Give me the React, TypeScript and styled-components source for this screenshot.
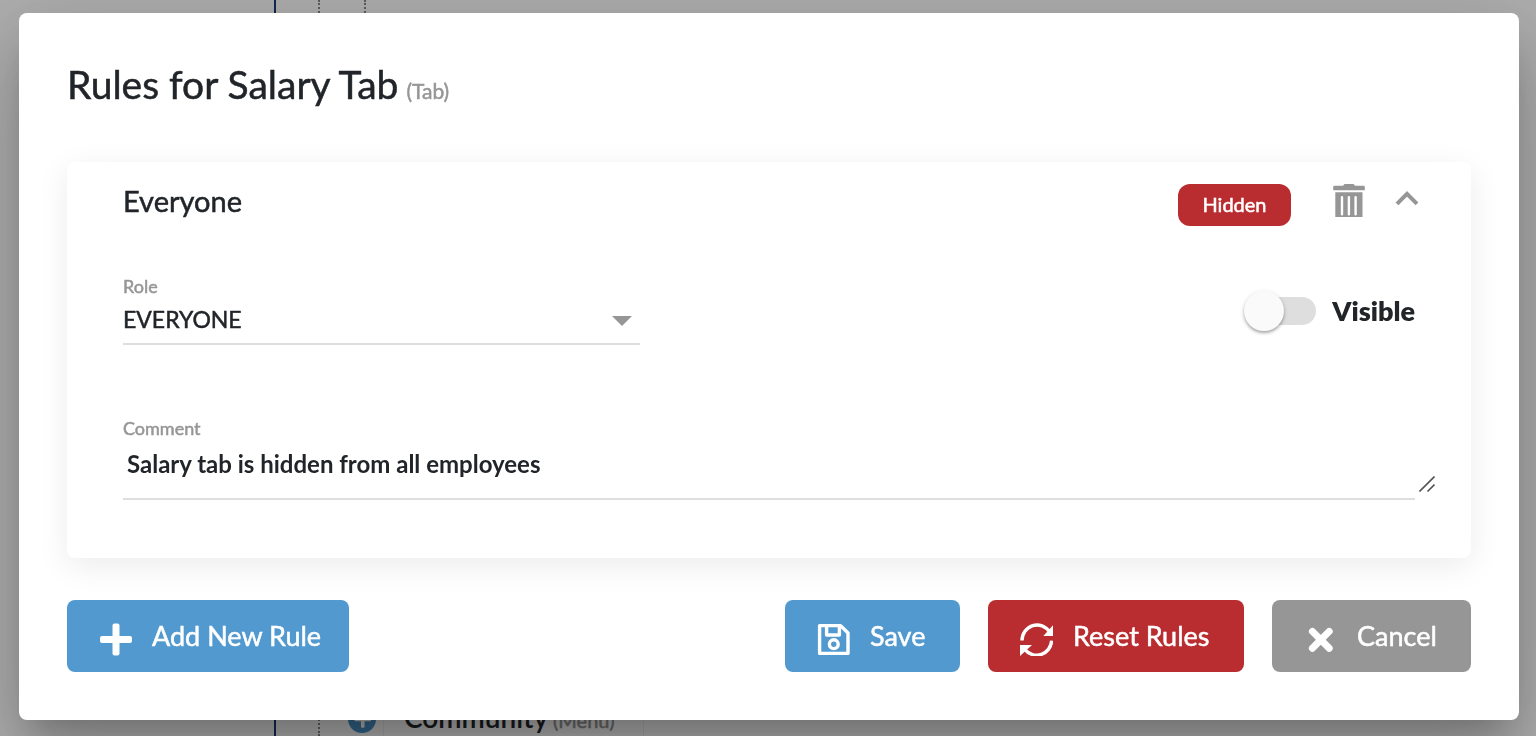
import React, { useState } from "react";
import styled, { createGlobalStyle, css } from "styled-components";

const colors = {
  text: "#212529",
  muted: "#969696",
  line: "#dedede",
  blue: "#5199cf",
  red: "#b92d30",
  navy: "#1d3a78",
};

/* Lato has no medium cut here, so a hairline stroke gives the regular one its weight. */
const medium = css`
  font-weight: 400;
  -webkit-text-stroke: 0.5px currentColor;
`;

const GlobalStyle = createGlobalStyle`
  *, *::before, *::after { box-sizing: border-box; }
  body {
    margin: 0;
    background: #fff;
    color: ${colors.text};
    font-family: Lato, "Liberation Sans", sans-serif;
    -webkit-font-smoothing: antialiased;
  }
  button, select, textarea, input { font: inherit; color: inherit; }
`;

const Page = styled.div`
  display: flex;
  height: 100vh;
  overflow: hidden;
`;

const Sidebar = styled.aside`
  flex: 0 0 276px;
  border-right: 2px solid ${colors.navy};
`;

const Tree = styled.div`
  flex: 1;
  display: flex;
  flex-direction: column;
  justify-content: space-between;
  margin-left: 42px;
  border-left: 2px dotted #888;
`;

const Branch = styled.div`
  height: 160px;
  margin-left: 44px;
  border-left: 2px dotted #888;
`;

const TreeRow = styled.div`
  display: flex;
  align-items: center;
  gap: 7px;
  height: 56px;
  margin: 0 0 -11px 28px;
`;

const AddDot = styled.button`
  display: flex;
  align-items: center;
  justify-content: center;
  width: 28px;
  height: 28px;
  padding: 0;
  border: 0;
  border-radius: 50%;
  background: #4a92c8;
  color: #fff;
`;

const TreeCard = styled.div`
  height: 56px;
  padding: 0 28px 0 20px;
  border: 1px solid #f0f0f0;
  font-size: 28px;
  font-weight: 600;
  line-height: 50px;
  white-space: nowrap;
`;

const Kind = styled.small<{ $size: number }>`
  ${medium}
  margin-left: ${(p) => (p.$size > 20 ? 8 : 5)}px;
  color: ${colors.muted};
  font-size: ${(p) => p.$size}px;
`;

const Overlay = styled.div`
  position: fixed;
  inset: 0;
  padding: 13px 17px 16px 19px;
  background: rgba(0, 0, 0, 0.32);
`;

const Dialog = styled.section`
  padding: 48px;
  border-radius: 8px;
  background: #fff;
  box-shadow:
    0 22px 30px -14px rgba(0, 0, 0, 0.2),
    0 48px 76px 6px rgba(0, 0, 0, 0.14),
    0 18px 92px 16px rgba(0, 0, 0, 0.12);
`;

const Title = styled.h1`
  ${medium}
  margin: 0 0 48px;
  font-size: 39px;
  line-height: 46px;
`;

const RuleCard = styled.article`
  padding: 22px 56px 58px;
  border-radius: 8px;
  background: #fff;
  box-shadow: 0 8px 32px rgba(0, 0, 0, 0.08);
`;

const RuleHeader = styled.header`
  display: flex;
  align-items: flex-start;
  margin-right: -4px;
`;

const RuleName = styled.h2`
  ${medium}
  flex: 1;
  margin: 0;
  font-size: 29px;
  line-height: 34px;
`;

const Badge = styled.span`
  ${medium}
  min-width: 113px;
  height: 42px;
  border-radius: 12px;
  background: ${colors.red};
  color: #fff;
  font-size: 20px;
  line-height: 40px;
  text-align: center;
`;

const IconButton = styled.button<{ $gap: number }>`
  display: flex;
  align-items: center;
  height: 33px;
  margin: 0 0 0 ${(p) => p.$gap}px;
  padding: 0;
  border: 0;
  background: none;
  color: ${colors.muted};
  cursor: pointer;
`;

const RuleRow = styled.div`
  display: flex;
  justify-content: space-between;
  align-items: flex-start;
  margin-top: 50px;
`;

const Field = styled.div<{ $width: string }>`
  position: relative;
  display: flex;
  flex-direction: column;
  width: ${(p) => p.$width};
  border-bottom: 2px solid ${colors.line};
`;

const FieldLabel = styled.label`
  ${medium}
  color: ${colors.muted};
  font-size: 18px;
  line-height: 20px;
`;

const RoleSelect = styled.select`
  height: 47px;
  padding: 0 40px 2px 0;
  border: 0;
  outline: 0;
  appearance: none;
  background: transparent;
  font-size: 23px;
  -webkit-text-stroke: 0.5px currentColor;
`;

const SelectArrow = styled.svg`
  position: absolute;
  right: 8px;
  bottom: 17px;
  pointer-events: none;
`;

const CommentBox = styled.textarea`
  display: block;
  height: 60px;
  padding: 11px 4px 0;
  border: 0;
  outline: 0;
  resize: none;
  overflow: hidden;
  background: transparent;
  font-size: 24px;
  font-weight: 700;
  line-height: 30px;
`;

const ResizeGrip = styled.svg`
  position: absolute;
  right: -20px;
  bottom: 6px;
`;

const SwitchLabel = styled.label`
  display: flex;
  align-items: center;
  gap: 16px;
  margin-top: 15px;
  font-size: 27px;
  font-weight: 800;
  line-height: 40px;
`;

const Switch = styled.input`
  display: flex;
  align-items: center;
  width: 68px;
  height: 28px;
  margin: 0;
  border-radius: 14px;
  appearance: none;
  background: ${colors.line};
  cursor: pointer;

  &::before {
    content: "";
    width: 40px;
    height: 40px;
    margin-left: -4px;
    border-radius: 50%;
    background: #fafafa;
    box-shadow: 0 2px 3px rgba(0, 0, 0, 0.3), 0 1px 6px rgba(0, 0, 0, 0.08);
  }

  &:checked { background: #a8cce7; }
  &:checked::before { margin-left: 32px; background: ${colors.blue}; }
`;

const CommentRow = styled.div`
  margin-top: 73px;
`;

const Actions = styled.footer`
  display: flex;
  gap: 28px;
  margin-top: 42px;
`;

const Spacer = styled.div`
  flex: 1;
`;

const ActionButton = styled.button<{ $color: string; $width: number }>`
  ${medium}
  display: flex;
  align-items: center;
  gap: 20px;
  width: ${(p) => p.$width}px;
  height: 72px;
  padding: 0 0 0 32px;
  border: 0;
  border-radius: 8px;
  background: ${(p) => p.$color};
  color: #fff;
  font-size: 27px;
  line-height: 36px;
  white-space: nowrap;
  cursor: pointer;

  svg { flex: none; margin-top: 6px; }
`;

const PlusIcon = ({ size = 33 }: { size?: number }) => (
  <svg width={size} height={size} viewBox="0 0 33 33" fill="currentColor" aria-hidden="true">
    <rect x="1" y="13" width="32" height="7" rx="2" />
    <rect x="13.5" y="0.5" width="7" height="32" rx="2" />
  </svg>
);

const SaveIcon = () => (
  <svg width="33" height="33" viewBox="0 0 33 33" fill="none" stroke="currentColor" strokeWidth="3.4" strokeLinejoin="round" aria-hidden="true">
    <path d="M2.6 2.6H23.6L31 10V30.4H2.6Z" />
    <path d="M9.6 2.6V12H22.4V2.6" />
    <circle cx="16.8" cy="21.2" r="4.4" />
  </svg>
);

const ResetIcon = () => (
  <svg width="33" height="33" viewBox="0 0 33 33" aria-hidden="true">
    <g fill="none" stroke="currentColor" strokeWidth="3.4">
      <path d="M2 17.6A15 15.6 0 0 1 29.5 9" />
      <path d="M31.6 17.6A15 15.2 0 0 1 5 26.6" />
    </g>
    <path fill="currentColor" d="M33 2.3V13H23.3ZM0 22H12L0 33Z" />
  </svg>
);

const CloseIcon = () => (
  <svg width="33" height="33" viewBox="0 0 33 33" stroke="currentColor" strokeWidth="7" strokeLinecap="round" aria-hidden="true">
    <path d="M8.4 8.4L25.2 25.2M25.2 8.4L8.4 25.2" />
  </svg>
);

const TrashIcon = () => (
  <svg width="32" height="33" viewBox="0 0 32 33" fill="currentColor" aria-hidden="true">
    <path d="M10 1.7L11.5 0H20.5L22 1.7H30.5A1.3 1.3 0 0 1 31.8 3V6.3H0.2V3A1.3 1.3 0 0 1 1.5 1.7Z" />
    <path fillRule="evenodd" d="M2.3 8.2H29.5V33H2.3ZM7.8 13V30.4A1.2 1 0 0 0 10.2 30.4V13A1.2 1 0 0 0 7.8 13ZM14.7 13V30.4A1.2 1 0 0 0 17.1 30.4V13A1.2 1 0 0 0 14.7 13ZM21.4 13V30.4A1.2 1 0 0 0 23.8 30.4V13A1.2 1 0 0 0 21.4 13Z" />
  </svg>
);

const ChevronUpIcon = () => (
  <svg width="24" height="22" viewBox="0 0 24 22" fill="none" stroke="currentColor" strokeWidth="4" aria-hidden="true">
    <path d="M2 13.8L12 3.8L22 13.8" />
  </svg>
);

export default function App() {
  const [visible, setVisible] = useState(false);
  const [comment, setComment] = useState("Salary tab is hidden from all employees");

  return (
    <>
      <GlobalStyle />
      <Page>
        <Sidebar />
        <Tree>
          <Branch />
          <TreeRow>
            <AddDot type="button" aria-label="Add item"><PlusIcon size={17} /></AddDot>
            <TreeCard>Community<Kind $size={20}>(Menu)</Kind></TreeCard>
          </TreeRow>
        </Tree>
      </Page>
      <Overlay>
        <Dialog role="dialog" aria-modal="true" aria-labelledby="dialog-title">
          <Title id="dialog-title">Rules for Salary Tab<Kind $size={21}>(Tab)</Kind></Title>
          <RuleCard>
            <RuleHeader>
              <RuleName>Everyone</RuleName>
              <Badge>Hidden</Badge>
              <IconButton type="button" aria-label="Delete rule" $gap={42}><TrashIcon /></IconButton>
              <IconButton type="button" aria-label="Collapse rule" $gap={30}><ChevronUpIcon /></IconButton>
            </RuleHeader>
            <RuleRow>
              <Field $width="40%">
                <FieldLabel htmlFor="role">Role</FieldLabel>
                <RoleSelect id="role" defaultValue="EVERYONE">
                  <option>EVERYONE</option>
                </RoleSelect>
                <SelectArrow width="20" height="10" viewBox="0 0 20 10" aria-hidden="true">
                  <path fill={colors.muted} d="M0 0H20L10 10Z" />
                </SelectArrow>
              </Field>
              <SwitchLabel>
                <Switch type="checkbox" role="switch" checked={visible} onChange={(e) => setVisible(e.target.checked)} />
                Visible
              </SwitchLabel>
            </RuleRow>
            <CommentRow>
              <Field $width="100%">
                <FieldLabel htmlFor="comment">Comment</FieldLabel>
                <CommentBox id="comment" value={comment} onChange={(e) => setComment(e.target.value)} />
                <ResizeGrip width="16" height="16" viewBox="0 0 16 16" fill="none" stroke="#555" strokeWidth="1.6" aria-hidden="true">
                  <path d="M0.5 15.5L15.5 0.5M8.5 15.5L15.5 8.5" />
                </ResizeGrip>
              </Field>
            </CommentRow>
          </RuleCard>
          <Actions>
            <ActionButton type="button" $color={colors.blue} $width={282}><PlusIcon />Add New Rule</ActionButton>
            <Spacer />
            <ActionButton type="button" $color={colors.blue} $width={175}><SaveIcon />Save</ActionButton>
            <ActionButton type="button" $color={colors.red} $width={256}><ResetIcon />Reset Rules</ActionButton>
            <ActionButton type="button" $color={colors.muted} $width={199}><CloseIcon />Cancel</ActionButton>
          </Actions>
        </Dialog>
      </Overlay>
    </>
  );
}
